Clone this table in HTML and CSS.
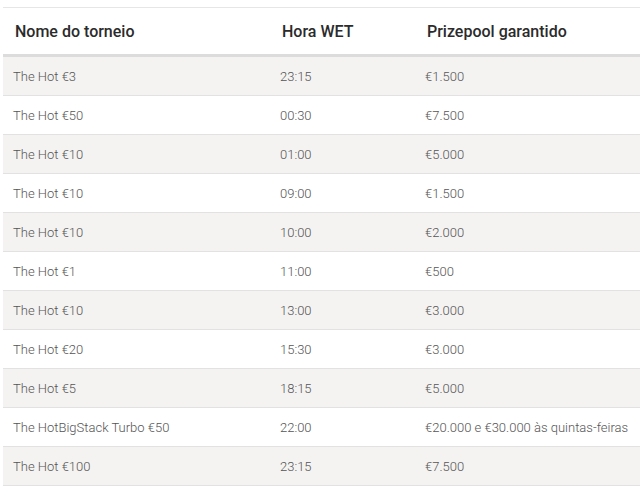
FILE: index.html
```html
<!DOCTYPE html>
<html lang="pt">
<head>
<meta charset="utf-8">
<title>Torneios</title>
<link rel="stylesheet" href="styles.css">
</head>
<body>
<table class="schedule">
  <colgroup>
    <col class="col-name">
    <col class="col-time">
    <col class="col-prize">
  </colgroup>
  <thead>
    <tr>
      <th>Nome do torneio</th>
      <th>Hora WET</th>
      <th>Prizepool garantido</th>
    </tr>
  </thead>
  <tbody>
    <tr><td>The Hot €3</td><td>23:15</td><td>€1.500</td></tr>
    <tr><td>The Hot €50</td><td>00:30</td><td>€7.500</td></tr>
    <tr><td>The Hot €10</td><td>01:00</td><td>€5.000</td></tr>
    <tr><td>The Hot €10</td><td>09:00</td><td>€1.500</td></tr>
    <tr><td>The Hot €10</td><td>10:00</td><td>€2.000</td></tr>
    <tr><td>The Hot €1</td><td>11:00</td><td>€500</td></tr>
    <tr><td>The Hot €10</td><td>13:00</td><td>€3.000</td></tr>
    <tr><td>The Hot €20</td><td>15:30</td><td>€3.000</td></tr>
    <tr><td>The Hot €5</td><td>18:15</td><td>€5.000</td></tr>
    <tr><td>The HotBigStack Turbo €50</td><td>22:00</td><td>€20.000 e €30.000 às quintas-feiras</td></tr>
    <tr><td>The Hot €100</td><td>23:15</td><td>€7.500</td></tr>
  </tbody>
</table>
</body>
</html>
```
FILE: styles.css
```css
html, body {
  margin: 0;
  padding: 0;
  background: #ffffff;
}
body {
  padding: 7px 1px 0 3px;
  font-family: Roboto, "Liberation Sans", sans-serif;
}
.schedule {
  width: 637px;
  border-collapse: collapse;
  border-top: 1px solid #e6e6e6;
  table-layout: fixed;
}
.col-name { width: 267px; }
.col-time { width: 145px; }
.schedule th {
  height: 46px;
  padding: 0 0 0 12px;
  text-align: left;
  font-size: 16px;
  font-weight: 500;
  color: #2b2b2b;
  border-bottom: 3px solid #dcdcdc;
  vertical-align: middle;
}
.schedule td {
  height: 38px;
  padding: 0 0 0 10px;
  font-size: 13px;
  font-weight: 300;
  color: #555555;
  border-bottom: 1px solid #e2e2e2;
  vertical-align: middle;
  white-space: nowrap;
}
.schedule tbody tr:nth-child(odd) td {
  background: #f4f3f2;
}
```
